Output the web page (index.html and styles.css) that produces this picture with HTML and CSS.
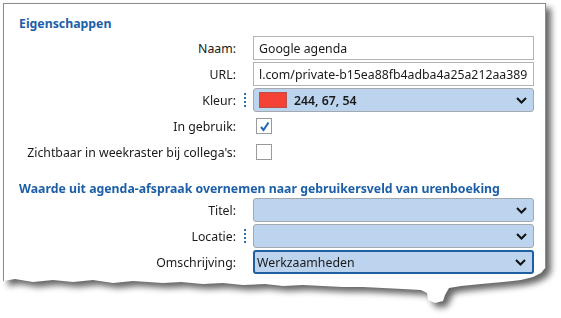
FILE: index.html
```html
<!DOCTYPE html>
<html lang="nl">
<head>
    <meta charset="UTF-8">
    <title>Agenda instellingen</title>
    <link rel="stylesheet" href="styles.css">
</head>
<body>
    <div class="paper">
        <div class="sheet">
            <!-- Eigenschappen -->
            <div class="section-title">Eigenschappen</div>
            <div class="form">
                <div class="label">Naam:</div>
                <div class="marker"></div>
                <div class="field text-input">Google agenda</div>

                <div class="label">URL:</div>
                <div class="marker"></div>
                <div class="field text-input">l.com/private-b15ea88fb4adba4a25a212aa389</div>

                <div class="label">Kleur:</div>
                <div class="marker"><span class="dots"></span></div>
                <div class="field select">
                    <span class="swatch"></span>
                    <span class="color-value">244, 67, 54</span>
                    <svg class="chevron" width="11" height="7" viewBox="0 0 11 7"><polyline points="1,1 5.5,5.5 10,1" fill="none" stroke="#111" stroke-width="2"/></svg>
                </div>

                <div class="label check-row">In gebruik:</div>
                <div class="marker"></div>
                <div class="field check-row">
                    <span class="checkbox">
                        <svg width="13" height="13" viewBox="0 0 13 13"><polyline points="3,7 5.5,10 10.5,2.5" fill="none" stroke="#2166b8" stroke-width="2"/></svg>
                    </span>
                </div>

                <div class="label check-row">Zichtbaar in weekraster bij collega's:</div>
                <div class="marker"></div>
                <div class="field check-row">
                    <span class="checkbox"></span>
                </div>
            </div>

            <!-- Urenboeking -->
            <div class="section-title second">Waarde uit agenda-afspraak overnemen naar gebruikersveld van urenboeking</div>
            <div class="form compact">
                <div class="label">Titel:</div>
                <div class="marker"></div>
                <div class="field select">
                    <span class="color-value"></span>
                    <svg class="chevron" width="11" height="7" viewBox="0 0 11 7"><polyline points="1,1 5.5,5.5 10,1" fill="none" stroke="#111" stroke-width="2"/></svg>
                </div>

                <div class="label">Locatie:</div>
                <div class="marker"><span class="dots"></span></div>
                <div class="field select">
                    <span class="color-value"></span>
                    <svg class="chevron" width="11" height="7" viewBox="0 0 11 7"><polyline points="1,1 5.5,5.5 10,1" fill="none" stroke="#111" stroke-width="2"/></svg>
                </div>

                <div class="label">Omschrijving:</div>
                <div class="marker"></div>
                <div class="field select focused">
                    <span class="select-text">Werkzaamheden</span>
                    <svg class="chevron" width="11" height="7" viewBox="0 0 11 7"><polyline points="1,1 5.5,5.5 10,1" fill="none" stroke="#111" stroke-width="2"/></svg>
                </div>
            </div>
        </div>
    </div>
</body>
</html>
```

FILE: styles.css
```css
* {
    margin: 0;
    padding: 0;
    box-sizing: border-box;
}

body {
    font-family: "Noto Sans", "Open Sans", sans-serif;
    font-size: 12.3px;
    color: #1a1a1a;
    background-color: #ffffff;
    width: 561px;
    height: 318px;
    overflow: hidden;
}

/* schaduw rond het gescheurde papier */
.paper {
    padding: 3px 0 0 3px;
    filter: drop-shadow(5px 5px 3px rgba(0, 0, 0, 0.6));
}

.sheet {
    width: 543px;
    height: 305px;
    background-color: #ffffff;
    border: 1px solid #8c8c8c;
    padding: 11px 11px 0 15px;
    clip-path: polygon(0 0, 100% 0, 100% 264px, 538px 270px, 530px 274px, 518px 277px, 500px 279px, 478px 281px, 458px 283px, 446px 285px, 442px 292px, 440px 298px, 432px 300px, 425px 297px, 424px 290px, 418px 287px, 400px 286px, 380px 285px, 360px 284px, 340px 284px, 320px 283px, 300px 282px, 280px 283px, 262px 281px, 240px 282px, 220px 280px, 200px 281px, 178px 279px, 160px 280px, 130px 278px, 110px 280px, 90px 277px, 70px 279px, 50px 277px, 30px 279px, 12px 276px, 0 278px);
}

.section-title {
    color: #1c5fa8;
    font-weight: bold;
    line-height: 18px;
    white-space: nowrap;
}

.section-title.second {
    margin-top: 16px;
}

.form {
    display: grid;
    grid-template-columns: 1fr 17px 281px;
    grid-auto-rows: 24px;
    row-gap: 2px;
    margin-top: 3px;
}

.form.compact {
    margin-top: 0;
}

.label {
    display: flex;
    align-items: center;
    justify-content: flex-end;
    white-space: nowrap;
}

.marker {
    display: flex;
    align-items: center;
    justify-content: center;
}

.dots {
    width: 2px;
    height: 14px;
    background-image: linear-gradient(#2d6fb3 2px, transparent 2px);
    background-size: 2px 4px;
}

.check-row {
    height: 24px;
}

.field {
    display: flex;
    align-items: center;
}

.text-input {
    border: 1px solid #b4b4b4;
    background-color: #ffffff;
    padding-left: 5px;
    white-space: nowrap;
    overflow: hidden;
}

.select {
    background-color: #bcd4ed;
    border: 1px solid #a3a9b0;
    border-radius: 3px;
    padding: 0 6px 0 5px;
}

.select.focused {
    border: 2px solid #1f5e9f;
    padding-left: 2px;
}

.swatch {
    width: 28px;
    height: 16px;
    background-color: #f44336;
    border: 1px solid #b8504a;
    margin-right: 7px;
}

.color-value {
    font-weight: 600;
    flex: 1;
}

.select-text {
    flex: 1;
}

.chevron {
    flex-shrink: 0;
}

.checkbox {
    width: 16px;
    height: 16px;
    border: 1px solid #9a9a9a;
    background-color: #ffffff;
    margin-left: 3px;
    display: flex;
    align-items: center;
    justify-content: center;
}
```
